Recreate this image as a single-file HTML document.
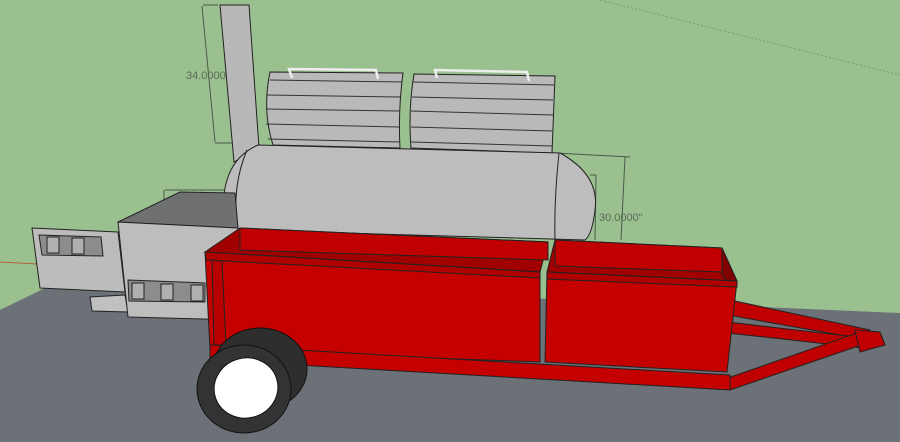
<!DOCTYPE html>
<html><head><meta charset="utf-8"><style>
html,body{margin:0;padding:0;width:900px;height:442px;overflow:hidden;background:#9bc08f}
svg{display:block}
text{font-family:"Liberation Sans",sans-serif;font-size:11px;fill:#5a6a58}
</style></head><body>
<svg width="900" height="442" viewBox="0 0 900 442">
<rect width="900" height="442" fill="#9bc08f"/>
<polygon points="0,310 45,288 600,300 900,313 900,442 0,442" fill="#6b7177"/>
<line x1="0" y1="262" x2="38" y2="264" stroke="#b06040" stroke-width="1"/>
<line x1="600" y1="0" x2="900" y2="75" stroke="#7f9a78" stroke-width="1" stroke-dasharray="2,2"/>
<!-- dimension 34 -->
<g stroke="#4a5a48" stroke-width="1" fill="none">
<line x1="203" y1="5" x2="218" y2="5"/><line x1="202" y1="6" x2="215" y2="142"/><line x1="215" y1="143" x2="232" y2="143"/>
<line x1="555" y1="153" x2="630" y2="157"/><line x1="625" y1="157" x2="621" y2="240"/><line x1="590" y1="175" x2="596" y2="175"/><line x1="596" y1="175" x2="595" y2="240"/>
<line x1="165" y1="190" x2="230" y2="190"/><line x1="164" y1="190" x2="164" y2="200"/>
</g>
<text x="186" y="79">34.0000</text>
<text x="599" y="221">30.0000"</text>
<!-- chimney -->
<polygon points="220,5 249,5 259,148 234,162" fill="#b8b8b8" stroke="#222" stroke-width="1"/>
<!-- lids -->
<path d="M270,72 L403,73 Q398,110 400,148 L273,145 Q262,110 270,72Z" fill="#b9b9b9" stroke="#222"/>
<path d="M414,74 L555,76 L552,153 L411,148 Q408,110 414,74Z" fill="#b9b9b9" stroke="#222"/>
<g stroke="#333" stroke-width="1">
<line x1="270" y1="80" x2="402" y2="82"/><line x1="267" y1="95" x2="400" y2="97"/><line x1="266" y1="109" x2="399" y2="111"/><line x1="266" y1="124" x2="399" y2="127"/><line x1="268" y1="139" x2="400" y2="142"/>
<line x1="413" y1="82" x2="554" y2="85"/><line x1="412" y1="97" x2="553" y2="100"/><line x1="411" y1="111" x2="553" y2="115"/><line x1="411" y1="127" x2="553" y2="131"/><line x1="411" y1="142" x2="552" y2="146"/>
</g>
<g stroke="#eee" stroke-width="2.5" fill="none">
<path d="M292,78 L289,69 L376,70 L378,79"/><path d="M437,78 L435,70 L527,72 L529,81"/>
</g>
<!-- tank -->
<path d="M258,145 L560,153 Q600,175 595,210 Q592,235 585,240 L240,230 Q222,220 224,195 Q228,158 258,145Z" fill="#bdbdbd" stroke="#222"/>
<path d="M247,150 Q232,185 237,228" stroke="#222" fill="none"/>
<path d="M559,153 Q554,200 555,240" stroke="#222" fill="none"/>
<!-- left panel -->
<polygon points="32,228 118,232 125,292 40,288" fill="#bcbcbc" stroke="#222"/>
<polygon points="39,235 101,237 103,256 42,255" fill="#8c8c8c" stroke="#222"/>
<rect x="47" y="237" width="12" height="16" fill="#b0b0b0" stroke="#222"/>
<rect x="72" y="238" width="12" height="16" fill="#b0b0b0" stroke="#222"/>
<!-- step -->
<polygon points="90,297 125,295 128,312 92,311" fill="#c0c0c0" stroke="#222"/>
<!-- firebox -->
<polygon points="118,222 180,192 235,193 238,228" fill="#6f7070" stroke="#222"/>
<polygon points="118,222 238,228 240,320 128,317" fill="#bdbdbd" stroke="#222"/>
<polygon points="128,280 205,283 205,302 129,301" fill="#8c8c8c" stroke="#222"/>
<rect x="132" y="283" width="12" height="16" fill="#b0b0b0" stroke="#222"/>
<rect x="161" y="284" width="12" height="16" fill="#b0b0b0" stroke="#222"/>
<rect x="191" y="285" width="12" height="16" fill="#b0b0b0" stroke="#222"/>
<!-- tongue -->
<g fill="#c00000" stroke="#222">
<polygon points="730,300 870,330 868,340 728,315"/>
<polygon points="728,322 865,338 863,348 728,333"/>
<polygon points="728,378 860,332 870,342 730,390"/>
<polygon points="855,330 880,332 885,345 860,352"/>
</g>
<!-- red box1 -->
<g stroke="#222" stroke-width="1">
<polygon points="205,252 240,228 548,242 540,272" fill="#a00000"/>
<polygon points="240,228 548,242 548,260 240,250" fill="#c00000"/>
<polygon points="205,252 540,272 540,362 210,350" fill="#c40000"/>
<polygon points="205,252 540,272 540,278 206,260" fill="#b00000"/>
<polygon points="212,260 222,261 226,345 214,345" fill="#b80000"/>
<!-- box2 -->
<polygon points="547,272 555,240 722,248 737,281" fill="#a00000"/>
<polygon points="555,240 722,248 722,272 555,266" fill="#c00000"/>
<polygon points="722,248 737,281 735,290 722,275" fill="#800000"/>
<polygon points="547,272 737,281 727,372 545,362" fill="#c40000"/>
<polygon points="547,272 737,281 737,287 547,279" fill="#b00000"/>
<!-- rail -->
<polygon points="210,345 730,375 730,390 210,360" fill="#c40000"/>
</g>
<!-- wheel -->
<ellipse cx="260" cy="369" rx="47" ry="41" fill="#2e2e2e" stroke="#111"/>
<path d="M230,345 L280,335 L300,375 L265,420Z" fill="#2e2e2e"/>
<ellipse cx="244" cy="389" rx="47" ry="44" fill="#333" stroke="#111"/>
<ellipse cx="246" cy="388" rx="32" ry="30" fill="#fff" stroke="#111" transform="rotate(-15 246 388)"/>
</svg>
</body></html>
